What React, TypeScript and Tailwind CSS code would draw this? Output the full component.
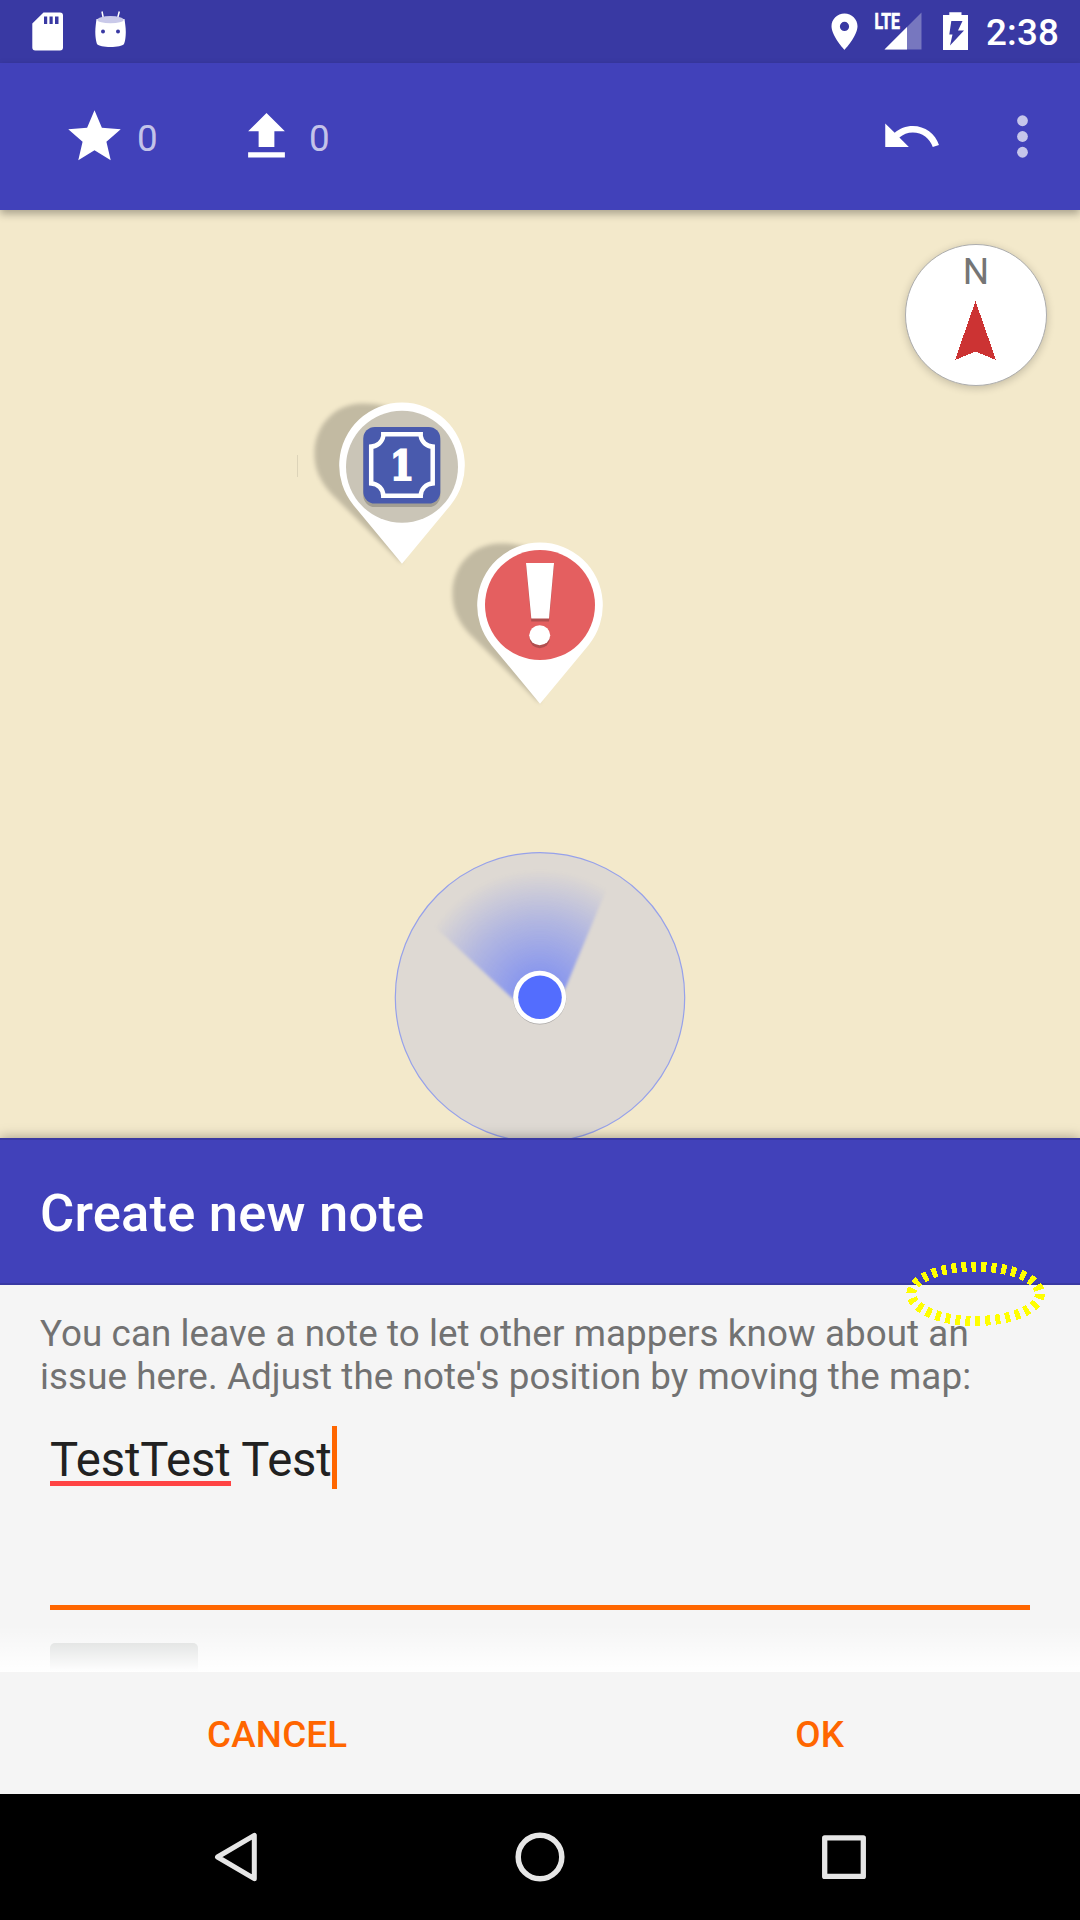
import React from "react";

function StatusBar() {
  return (
    <div className="flex h-[63px] shrink-0 items-start bg-[#3939a3] pl-[32px] pr-[20px] text-white">
      <svg className="mt-[12px] h-[39px] w-[31px]" viewBox="0 0 31 39">
        <path
          fill="#fff"
          fillRule="evenodd"
          d="M11.5.6H28a3 3 0 0 1 3 3V35.600a3 3 0 0 1-3 3H3.300a3 3 0 0 1-3-3V11.600ZM12 4.500V12H15.200V4.500ZM17.500 4.500V12H20.700V4.500ZM23 4.500V12H26.500V4.500Z"
        />
      </svg>
      <svg className="ml-[32px] mt-[10px] h-[38px] w-[32px]" viewBox="0 0 32 38">
        <path d="M7 1.500L8.400 8.500M24.300 1.500L22.500 8.500" stroke="#fff" strokeWidth="1.500" />
        <path d="M1.500 9C1 13 .3 17 .3 22c0 5 1 10 1.700 12 1.500 2 7 3 13.500 3s12-1 13.500-3c1-2 1.800-7 1.800-12 0-5-.8-9-1.300-13Z" fill="#fff" />
        <ellipse cx="15.500" cy="9.700" rx="13.200" ry="3.600" fill="#c9c9e9" />
        <circle cx="8" cy="21.500" r="2" fill="#3939a3" />
        <circle cx="23" cy="21.500" r="2" fill="#3939a3" />
      </svg>
      <div className="flex-1" />
      <svg className="mt-[13px] h-[38px] w-[27px]" viewBox="0 0 27 38">
        <path
          fill="#fff"
          fillRule="evenodd"
          d="M13.500.4C6.300.4.500 6.100.500 13.300c0 9.700 13 23.700 13 23.700s13-14 13-23.700C26.500 6.100 20.700.400 13.500.400Zm0 8.400a4.600 4.600 0 1 1 0 9.200 4.600 4.600 0 0 1 0-9.200Z"
        />
      </svg>
      <svg className="ml-[17px] mt-[12px] h-[38px] w-[48px] overflow-visible" viewBox="0 0 48 38">
        <path d="M46.500.5V37.500H9.500Z" fill="#7777bf" />
        <path d="M32 15V37.500H9.500Z" fill="#fff" />
        <text
          x="-0.500"
          y="17.200"
          fontFamily="Roboto"
          fontWeight="700"
          fontSize="22"
          textLength="25.500"
          lengthAdjust="spacingAndGlyphs"
          fill="#fff"
          stroke="#fff"
          strokeWidth="0.700"
        >
          LTE
        </text>
      </svg>
      <svg className="ml-[20px] mt-[12px] h-[38px] w-[25px]" viewBox="0 0 25 38">
        <path fill="#fff" fillRule="evenodd" d="M6.300.3H18.500V3H25V38H0V3H6.300ZM8.300 9 6.300 22.500H9.500L7 33.500 21 18.500H15L19.500 9Z" />
      </svg>
      <span className="ml-[18px] mt-[12px] w-[74px] whitespace-nowrap text-[36.750px] font-medium leading-[42px] tracking-[0.2px]">2:38</span>
    </div>
  );
}

function Toolbar() {
  return (
    <div className="relative z-10 flex h-[147px] shrink-0 items-center bg-[#4141ba] pl-[63px] pr-[26px] text-[36.750px] text-white/70 shadow-[0_4px_8px_rgba(0,0,0,0.3)]">
      <svg className="h-[63px] w-[63px]" viewBox="0 0 24 24" fill="#fff">
        <path d="M12 17.270L18.180 21l-1.640-7.030L22 9.240l-7.190-.61L12 2 9.190 8.630 2 9.240l5.460 4.730L5.820 21z" />
      </svg>
      <span className="ml-[11px] mt-[3px] w-[98px] leading-[43px]">0</span>
      <svg className="h-[63px] w-[63px]" viewBox="0 0 24 24" fill="#fff">
        <path d="M9 16h6v-6h4l-7-7-7 7h4zm-4 2h14v2H5z" />
      </svg>
      <span className="ml-[11px] mt-[3px] leading-[43px]">0</span>
      <div className="flex-1" />
      <svg className="h-[63px] w-[63px]" viewBox="0 0 24 24" fill="#fff">
        <path d="M12.500 8c-2.650 0-5.050.990-6.900 2.600L2 7v9h9l-3.620-3.620c1.390-1.160 3.160-1.880 5.120-1.880 3.540 0 6.550 2.310 7.600 5.500l2.370-.780C21.080 11.030 17.150 8 12.500 8z" />
      </svg>
      <svg className="ml-[48px] h-[63px] w-[63px]" viewBox="0 0 24 24" fill="#c6c6ea">
        <circle cx="12" cy="6" r="2.050" />
        <circle cx="12" cy="12" r="2.050" />
        <circle cx="12" cy="18" r="2.050" />
      </svg>
    </div>
  );
}

function PinBase({ children }: { children: React.ReactNode }) {
  return (
    <svg className="h-[180px] w-[170px]" viewBox="0 0 170 180">
      <path
        d="M97 171.500 26.500 102C14.500 89 9.500 76 9.500 62 9.500 33 30 11.500 58 11.500c14 0 24 3 36 6Z"
        fill="#000"
        fillOpacity="0.200"
        style={{ filter: "blur(2px)" }}
      />
      <path d="M97 171.700 48.500 113.200A62.800 62.800 0 1 1 145.500 113.200Z" fill="#fff" />
      {children}
    </svg>
  );
}

function QuestPin() {
  return (
    <div className="absolute left-[305px] top-[182px]">
      <PinBase>
        <circle cx="97" cy="74.700" r="56" fill="#cac5b7" />
        <rect x="58.300" y="38.500" width="77" height="76.500" rx="11.500" fill="#a29e93" />
        <rect x="58.300" y="35" width="77" height="76.500" rx="11.500" fill="#495aad" />
        <path
          d="M78.300 42.300H115.700V44A12.500 12.500 0 0 0 127.700 54.600V91.400A12.500 12.500 0 0 0 115.700 103.800H78.300A12.500 12.500 0 0 0 66.200 91.400V54.600A12.500 12.500 0 0 0 78.300 44Z"
          fill="none"
          stroke="#fff"
          strokeWidth="4.500"
        />
        <text
          x="85"
          y="87.700"
          fontFamily="DejaVu Serif"
          fontWeight="700"
          fontSize="41"
          textLength="24"
          lengthAdjust="spacingAndGlyphs"
          fill="#fff"
          stroke="#fff"
          strokeWidth="2.200"
        >
          1
        </text>
      </PinBase>
    </div>
  );
}

function NotePin() {
  return (
    <div className="absolute left-[443px] top-[322px]">
      <PinBase>
        <circle cx="97" cy="73" r="55" fill="#e45f60" />
        <g fill="#b14e4e">
          <path d="M83 33.500H111L106 89.500H88.300Z" />
          <circle cx="96.700" cy="106" r="10.200" />
        </g>
        <g fill="#fff">
          <path d="M83 31H111L106 86.500H88.300Z" />
          <ellipse cx="96.700" cy="103.300" rx="10.500" ry="10" />
        </g>
      </PinBase>
    </div>
  );
}

function LocationMarker() {
  return (
    <svg className="absolute left-[390px] top-[637px] h-[300px] w-[300px]" viewBox="0 0 300 300">
      <defs>
        <radialGradient id="beam" gradientUnits="userSpaceOnUse" cx="150" cy="150" r="127">
          <stop offset="0" stopColor="#536dfe" stopOpacity="0.700" />
          <stop offset="0.200" stopColor="#536dfe" stopOpacity="0.600" />
          <stop offset="0.600" stopColor="#536dfe" stopOpacity="0.320" />
          <stop offset="1" stopColor="#536dfe" stopOpacity="0" />
        </radialGradient>
      </defs>
      <circle cx="150" cy="150.300" r="144.700" fill="#ded9d3" stroke="#96a1ea" strokeWidth="1.200" />
      <path d="M123 152 30 66V0H234L175 142 150 160Z" fill="url(#beam)" style={{ filter: "blur(1.8px)" }} />
      <circle cx="149.700" cy="150.800" r="26.600" fill="#aaa7a5" />
      <circle cx="149.700" cy="150.300" r="26.500" fill="#fff" />
      <circle cx="150" cy="150.300" r="21.800" fill="#536dfe" />
    </svg>
  );
}

function Compass() {
  return (
    <div className="absolute left-[905px] top-[34px] flex h-[142px] w-[142px] flex-col items-center rounded-full border border-[#adadad] bg-white shadow-[0_2px_8px_rgba(0,0,0,0.2)]">
      <span className="mt-[5px] text-[37px] leading-[43px] text-[#757575]">N</span>
      <svg className="mt-[7px] h-[61px] w-[42px]" viewBox="0 0 42 61" shapeRendering="crispEdges">
        <path d="M20.500 1 41 60 20.500 51.500 0 60Z" fill="#cc3333" />
      </svg>
    </div>
  );
}

function MapView() {
  return (
    <div className="relative h-[928px] shrink-0 overflow-hidden bg-[#f3e9cb]">
      <div className="absolute left-[297px] top-[245px] h-[22px] w-px bg-[#ddd4b9]" />
      <QuestPin />
      <NotePin />
      <LocationMarker />
      <Compass />
    </div>
  );
}

function NoteSheet() {
  return (
    <div className="relative flex h-[656px] shrink-0 flex-col bg-[#f5f5f5] shadow-[0_0_12px_rgba(0,0,0,0.35)]">
      <div className="flex h-[147px] shrink-0 items-center border-y-2 border-[#3939a3] bg-[#4141ba] pl-[40px]">
        <h1 className="mt-[3px] whitespace-nowrap text-[52.500px] font-medium leading-[62px] tracking-[0.2px] text-white">Create new note</h1>
      </div>
      <div className="relative flex h-[387px] shrink-0 flex-col overflow-hidden">
        <p className="ml-[40px] mt-[27px] whitespace-nowrap text-[36.750px] leading-[43px] tracking-[0.085px] text-[#727272]">
          You can leave a note to let other mappers know about an
          <br />
          issue here. Adjust the note's position by moving the map:
        </p>
        <div className="mx-[50px] mt-[28px] flex h-[184px] shrink-0 items-start border-b-[5px] border-[#ff6600]">
          <div className="flex h-[63px] items-start whitespace-pre pt-[7px] text-[47.250px] leading-[55px] tracking-[-0.12px] text-[#212121]">
            <span className="relative">
              TestTest
              <span className="absolute inset-x-0 bottom-[2px] h-[5px] bg-[#ff4444]" />
            </span>
            <span> Test</span>
          </div>
          <div className="h-[63px] w-[5px] bg-[#ff6600]" />
        </div>
        <div className="ml-[50px] mt-[33px] h-[60px] w-[148px] shrink-0 rounded-[5px] bg-[#d5d7d6]" />
        <div className="absolute inset-x-0 bottom-0 h-[46px] bg-linear-to-b from-white/0 to-white" />
      </div>
      <div className="flex h-[122px] shrink-0 items-center pt-[2px] text-[36.750px] font-medium leading-[43px] tracking-[0.2px] text-[#ff6600]">
        <div className="flex w-[555px] justify-center pl-[2px]">CANCEL</div>
        <div className="flex w-[530px] justify-center pl-[7px]">OK</div>
      </div>
      <svg className="pointer-events-none absolute left-[900px] top-[115px] h-[80px] w-[150px]" viewBox="0 0 150 80" shapeRendering="crispEdges">
        <ellipse cx="75.600" cy="40.800" rx="64.300" ry="27.200" fill="none" stroke="#ffff00" strokeWidth="10" strokeDasharray="5 5" />
      </svg>
    </div>
  );
}

function NavBar() {
  return (
    <div className="flex h-[126px] shrink-0 items-center justify-center gap-[240px] bg-black">
      <svg className="h-[64px] w-[64px]" viewBox="0 0 64 64" fill="none" stroke="#e6e6e6" strokeWidth="5" strokeLinejoin="round">
        <path d="M50.300 10.300V53.700L13.500 32Z" />
      </svg>
      <svg className="h-[64px] w-[64px]" viewBox="0 0 64 64" fill="none" stroke="#e6e6e6" strokeWidth="5.500">
        <circle cx="32" cy="32" r="21.800" />
      </svg>
      <svg className="h-[64px] w-[64px]" viewBox="0 0 64 64" fill="none" stroke="#e6e6e6" strokeWidth="5.300" strokeLinejoin="round">
        <rect x="12.700" y="12.800" width="38.600" height="38.600" />
      </svg>
    </div>
  );
}

export default function App() {
  return (
    <div className="flex h-[1920px] w-[1080px] flex-col overflow-hidden bg-black font-[Roboto,sans-serif]">
      <StatusBar />
      <Toolbar />
      <MapView />
      <NoteSheet />
      <NavBar />
    </div>
  );
}
